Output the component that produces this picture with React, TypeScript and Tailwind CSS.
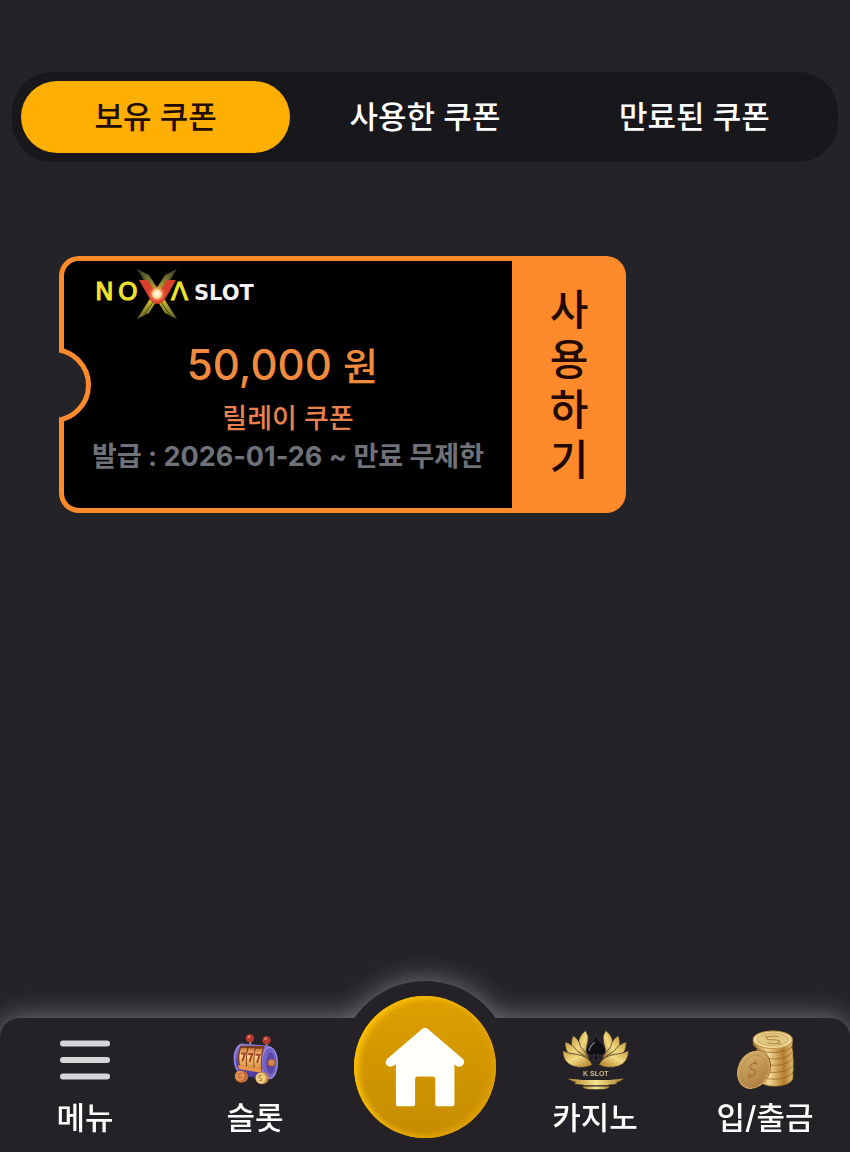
import { useState } from "react";
import type { ReactNode } from "react";

type TabKey = "owned" | "used" | "expired";

type Coupon = {
  id: number;
  amount: number;
  title: string;
  issuedAt: string;
  expiresAt: string;
};

const tabs: { key: TabKey; label: string }[] = [
  { key: "owned", label: "보유 쿠폰" },
  { key: "used", label: "사용한 쿠폰" },
  { key: "expired", label: "만료된 쿠폰" },
];

const coupons: Record<TabKey, Coupon[]> = {
  owned: [
    { id: 1, amount: 50000, title: "릴레이 쿠폰", issuedAt: "2026-01-26", expiresAt: "무제한" },
  ],
  used: [],
  expired: [],
};

function NovaLogo() {
  return (
    <svg viewBox="0 0 164 54" className="h-[54px] w-[164px]" role="img" aria-label="NOVA SLOT">
      <defs>
        <linearGradient id="ray" x1="0" y1="0" x2="0" y2="1">
          <stop offset="0" stopColor="#3b4230" />
          <stop offset="0.4" stopColor="#b5a52c" />
          <stop offset="0.65" stopColor="#c8b42a" />
          <stop offset="1" stopColor="#5d6428" />
        </linearGradient>
        <radialGradient id="flare">
          <stop offset="0" stopColor="#ffffff" />
          <stop offset="0.4" stopColor="#ffe9a8" />
          <stop offset="1" stopColor="#f04a20" stopOpacity="0" />
        </radialGradient>
      </defs>
      <g fontFamily="DejaVu Sans" fill="#f0e32c" stroke="#f0e32c" strokeWidth="1">
        <text x="-1" y="33" fontSize="25">N</text>
        <text x="22" y="33" fontSize="25">O</text>
        <text x="75" y="33" fontSize="25">Λ</text>
      </g>
      <path d="M41 2 L53 8 L81 52 L69 46 Z" fill="url(#ray)" />
      <path d="M81 2 L69 8 L41 52 L53 46 Z" fill="url(#ray)" />
      <path d="M44 5 L76 51 M78 5 L46 51" stroke="#2a2f14" strokeWidth="0.8" />
      <path d="M43 13 H52 L61 28 L71 13 H80 L68 34 Q61 40 55 34 Z" fill="#d8402c" />
      <circle cx="61" cy="27" r="9" fill="url(#flare)" />
      <text x="98" y="33" fontFamily="DejaVu Sans" fontSize="21" fontWeight="700" fill="#f2f2f2">SLOT</text>
    </svg>
  );
}

function MenuIcon() {
  return (
    <svg viewBox="0 0 50 60" className="h-[60px] w-[50px]" aria-hidden="true">
      <path d="M3 13.500H47M3 30H47M3 46.500H47" stroke="#d8d5d9" strokeWidth="6" strokeLinecap="round" />
    </svg>
  );
}

function SlotIcon() {
  return (
    <svg viewBox="70 30 136 177" className="h-[60px] w-[46px]" aria-hidden="true">
      <defs>
        <linearGradient id="drum" x1="0" y1="0" x2="0" y2="1">
          <stop offset="0" stopColor="#8a78c8" />
          <stop offset="0.5" stopColor="#5f4bb8" />
          <stop offset="1" stopColor="#4c3896" />
        </linearGradient>
        <linearGradient id="reel" x1="0" y1="0" x2="0" y2="1">
          <stop offset="0" stopColor="#c9783a" />
          <stop offset="0.4" stopColor="#ffd384" />
          <stop offset="1" stopColor="#d58a3c" />
        </linearGradient>
      </defs>
      <path d="M124 60V78M172 66V84" stroke="#b9a7a3" strokeWidth="5" />
      <circle cx="123" cy="54" r="12" fill="#b83a2e" />
      <circle cx="172" cy="60" r="12" fill="#b83a2e" />
      <circle cx="120" cy="50" r="4" fill="#e2806c" />
      <circle cx="169" cy="56" r="4" fill="#e2806c" />
      <path d="M96 70 L180 76 Q205 92 205 128 Q202 168 176 177 L96 164 Q74 148 74 112 Q76 78 96 70Z" fill="url(#drum)" />
      <path d="M95 73 Q78 88 78 116 Q79 145 94 158" fill="none" stroke="#9c8ce4" strokeWidth="4" />
      <ellipse cx="181" cy="127" rx="23" ry="46" fill="#7361c4" stroke="#9c8ce4" strokeWidth="4" />
      <ellipse cx="184" cy="128" rx="13" ry="31" fill="#5a47a8" />
      <path d="M94 77 H166 Q155 108 160 148 L92 142 Q82 108 94 77Z" fill="#7b3c22" />
      <path d="M97 83 H115 Q109 108 112 139 L94 137 Q88 106 97 83Z" fill="url(#reel)" />
      <path d="M118 84 H137 Q131 112 134 142 L115 139 Q112 108 118 84Z" fill="url(#reel)" />
      <path d="M140 85 H160 Q153 112 156 145 L137 142 Q134 110 140 85Z" fill="url(#reel)" />
      <path d="M97 99 H108 L101 122M118 101 H130 L122 124M140 103 H152 L144 127" fill="none" stroke="#a8422c" strokeWidth="6" />
      <path d="M88 134 L157 144 L156 156 L90 145Z" fill="#e8954a" />
      <rect x="176" y="117" width="24" height="20" rx="6" fill="#a0562e" />
      <circle cx="187" cy="126" r="9" fill="#d9854c" />
      <ellipse cx="98" cy="168" rx="20" ry="18" fill="#c26a38" />
      <ellipse cx="93" cy="165" rx="14" ry="15" fill="#e0904e" />
      <path d="M87 161 L99 158M88 168 L99 171" stroke="#b05c30" strokeWidth="3" />
      <ellipse cx="159" cy="172" rx="20" ry="18" fill="#c48a44" />
      <ellipse cx="155" cy="172" rx="15" ry="16" fill="#f3cf86" />
      <path d="M158 164 Q148 161 150 170 Q160 173 157 179 L150 179" fill="none" stroke="#b07638" strokeWidth="3" />
    </svg>
  );
}

function CasinoIcon() {
  return (
    <svg viewBox="48 30 202 180" className="h-[60px] w-[67px]" aria-hidden="true">
      <defs>
        <linearGradient id="petal" x1="0" y1="0" x2="1" y2="1">
          <stop offset="0" stopColor="#c49a3c" />
          <stop offset="0.45" stopColor="#f2d982" />
          <stop offset="1" stopColor="#a8741c" />
        </linearGradient>
        <linearGradient id="base" x1="0" y1="0" x2="1" y2="0">
          <stop offset="0" stopColor="#a87c24" />
          <stop offset="0.5" stopColor="#f7e48e" />
          <stop offset="1" stopColor="#a87c24" />
        </linearGradient>
        <g id="leaves" fill="url(#petal)" stroke="#242226" strokeWidth="2">
          <path d="M119 31 Q94 50 97 80 Q106 102 131 117 Q118 88 126 66 Q131 48 119 31Z" />
          <path d="M81 46 Q70 75 84 94 Q104 112 130 122 Q122 96 104 80 Q100 58 81 46Z" />
          <path d="M57 65 Q56 95 74 107 Q104 122 134 128 Q122 108 93 92 Q80 72 57 65Z" />
          <path d="M50 91 Q50 126 80 138 Q114 149 140 134 Q126 108 92 103 Q68 101 50 91Z" />
        </g>
      </defs>
      <use href="#leaves" />
      <use href="#leaves" transform="matrix(-1 0 0 1 299 0)" />
      <path d="M150 46 Q144 60 130 72 Q112 92 128 105 Q139 110 147 102 Q147 114 140 119 H160 Q153 114 153 102 Q161 110 172 105 Q188 91 170 72 Q156 60 150 46Z" fill="#0f0e13" stroke="#47424c" strokeWidth="2" />
      <path d="M147 66 Q130 80 130 92" fill="none" stroke="#6d6773" strokeWidth="5" />
      <text x="150" y="168" textAnchor="middle" fontFamily="Liberation Sans" fontSize="21" fontWeight="700" fill="#d2b88a">K SLOT</text>
      <path d="M64 176 Q92 179 110 180 H190 Q209 178 236 176 Q224 185 208 189 L216 192 Q190 193 184 196 H116 Q109 193 84 192 L92 188 Q77 184 64 176Z" fill="url(#base)" />
      <path d="M108 200 H193 Q184 208 174 208 H127 Q116 208 108 200Z" fill="url(#base)" />
    </svg>
  );
}

function CoinsIcon() {
  return (
    <svg viewBox="72 64 172 178" className="h-[60px] w-[58px]" aria-hidden="true">
      <defs>
        <linearGradient id="rim" x1="0" y1="0" x2="1" y2="0">
          <stop offset="0" stopColor="#a9742b" />
          <stop offset="0.35" stopColor="#f3d792" />
          <stop offset="0.75" stopColor="#b37c2e" />
          <stop offset="1" stopColor="#dfbd70" />
        </linearGradient>
        <linearGradient id="face" x1="0" y1="0" x2="1" y2="1">
          <stop offset="0" stopColor="#d9b570" />
          <stop offset="1" stopColor="#a8763a" />
        </linearGradient>
      </defs>
      <g fill="url(#rim)" stroke="#8d5b22" strokeWidth="2">
        <path d="M132 188 V206 Q143 232 190 231 Q235 228 241 207 V188Z" />
        <path d="M134 169 V186 Q146 211 190 210 Q235 207 242 186 V167Z" />
        <path d="M132 149 V166 Q145 192 190 190 Q235 187 242 166 V146Z" />
        <path d="M132 127 V145 Q145 170 190 169 Q236 165 241 145 V124Z" />
        <path d="M134 119 V127 Q150 151 190 150 Q230 147 239 129 V115Z" />
        <path d="M123 94 V108 Q139 132 190 131 Q233 126 239 111 V94Z" />
      </g>
      <ellipse cx="181" cy="93" rx="58" ry="26" fill="#f0d99b" stroke="#c69a4b" strokeWidth="3" />
      <ellipse cx="181" cy="92" rx="47" ry="19" fill="#e3c682" stroke="#c39a52" strokeWidth="2" />
      <path d="M198 84 Q177 78 161 87 Q161 94 183 93 Q203 93 201 101 Q187 108 165 102 M159 81 L166 86 M199 103 L207 108" fill="none" stroke="#b08640" strokeWidth="3" />
      <ellipse cx="132" cy="182" rx="41" ry="55" transform="rotate(25 132 182)" fill="#8b5a24" />
      <ellipse cx="124" cy="182" rx="45" ry="57" transform="rotate(25 124 182)" fill="url(#face)" stroke="#d7ae68" strokeWidth="3" />
      <ellipse cx="124" cy="182" rx="35" ry="46" transform="rotate(25 124 182)" fill="none" stroke="#b68545" strokeWidth="2" />
      <path d="M135 165 Q121 157 114 173 Q113 182 124 182 Q133 185 126 197 Q115 205 107 195 M131 155 L127 164 M115 199 L111 208" fill="none" stroke="#9c6c30" strokeWidth="3" />
    </svg>
  );
}

function HomeButton() {
  return (
    <a
      href="#home"
      aria-label="홈"
      className="absolute -top-[22px] left-1/2 z-10 flex size-[142px] -translate-x-1/2 items-center justify-center rounded-full bg-linear-to-b from-[#dda000] to-[#c58c00] shadow-[inset_4px_2px_6px_#ffc400,inset_-3px_-3px_7px_#e0a000]"
    >
      <svg viewBox="170 200 242 242" className="size-20" aria-hidden="true">
        <path
          d="M283 205 Q291 199 299 205 L405 296 Q413 305 406 315 Q399 322 387 319 L380 313 V432 Q380 440 372 440 H330 Q322 440 322 432 V358 Q322 350 314 350 H269 Q261 350 261 358 V432 Q261 440 253 440 H211 Q203 440 203 432 V313 L193 319 Q181 322 175 315 Q168 306 177 296 Z"
          fill="#fffffb"
        />
      </svg>
    </a>
  );
}

function NavItem({ href, label, children }: { href: string; label: string; children: ReactNode }) {
  return (
    <a href={href} className="flex flex-col items-center gap-2.5 text-white">
      {children}
      <span className="text-[31px] leading-9 font-medium">{label}</span>
    </a>
  );
}

function CouponTicket({ coupon }: { coupon: Coupon }) {
  return (
    <article className="relative flex w-full max-w-[567px] overflow-hidden rounded-[20px] bg-[#ff8a2b]">
      <div className="my-[5px] ml-[5px] flex-1 rounded-l-[15px] bg-black pt-1.5 pb-8">
        <div className="pl-8">
          <NovaLogo />
        </div>
        <div className="mt-[18px] text-center">
          <p className="text-[42px] leading-[52px] font-medium text-[#f08b3e]">
            {coupon.amount.toLocaleString("en-US")} <span className="text-[38px]">원</span>&nbsp;
          </p>
          <h2 className="mt-2 text-[27px] leading-[38px] font-medium text-[#e9824f]">{coupon.title}</h2>
          <p className="text-[27px] leading-[38px] font-bold text-[#6f7278] [font-optical-sizing:none]">
            발급 : {coupon.issuedAt} ~ 만료 {coupon.expiresAt}
          </p>
        </div>
      </div>
      <button
        type="button"
        aria-label="사용하기"
        className="flex w-[114px] shrink-0 flex-col items-center justify-center text-[42px] leading-[50px] font-medium text-[#210800]"
      >
        {"사용하기".split("").map((char) => (
          <span key={char}>{char}</span>
        ))}
      </button>
      {/* punched notch, clipped by the ticket edge */}
      <span className="absolute top-1/2 -left-[44px] size-[76px] -translate-y-1/2 rounded-full border-5 border-[#ff8a2b] bg-[#242328]" />
    </article>
  );
}

export default function App() {
  const [activeTab, setActiveTab] = useState<TabKey>("owned");

  return (
    <div className="flex min-h-screen flex-col overflow-x-hidden bg-[#242328] font-['Inter','Noto_Sans_CJK_KR',sans-serif]">
      <main className="flex-1 pt-[72px]">
        <div role="tablist" className="mx-3 grid grid-cols-3 rounded-[40px] bg-[#18171c] p-[9px]">
          {tabs.map((tab) => (
            <button
              key={tab.key}
              type="button"
              role="tab"
              aria-selected={activeTab === tab.key}
              onClick={() => setActiveTab(tab.key)}
              className={`h-[72px] rounded-[36px] text-[31px] font-medium ${
                activeTab === tab.key ? "bg-[#ffae02] text-[#210c00]" : "text-white"
              }`}
            >
              {tab.label}
            </button>
          ))}
        </div>

        <section className="mt-[94px] flex flex-col gap-6 px-[59px]">
          {coupons[activeTab].map((coupon) => (
            <CouponTicket key={coupon.id} coupon={coupon} />
          ))}
        </section>
      </main>

      <nav className="sticky bottom-0">
        <div className="absolute inset-0 drop-shadow-[0_0_14px_rgba(255,255,255,0.4)]">
          <span className="absolute -top-[37px] left-1/2 size-[172px] -translate-x-1/2 rounded-full bg-[#242226] [clip-path:inset(0_0_40px_0)]" />
          <span className="absolute inset-0 rounded-t-[20px] bg-[#242226]" />
        </div>
        <div className="relative grid grid-cols-5 pt-3 pb-4">
          <NavItem href="#menu" label="메뉴">
            <MenuIcon />
          </NavItem>
          <NavItem href="#slot" label="슬롯">
            <SlotIcon />
          </NavItem>
          <span />
          <NavItem href="#casino" label="카지노">
            <CasinoIcon />
          </NavItem>
          <NavItem href="#wallet" label="입/출금">
            <CoinsIcon />
          </NavItem>
          <HomeButton />
        </div>
      </nav>
    </div>
  );
}
